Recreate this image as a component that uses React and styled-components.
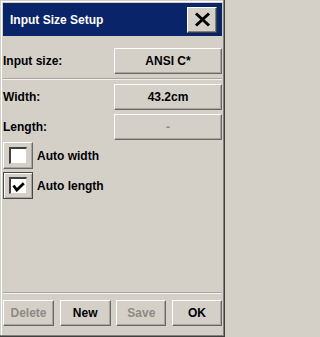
import React from 'react';
import styled, { createGlobalStyle } from 'styled-components';

const GlobalStyle = createGlobalStyle`
  html, body {
    margin: 0;
    padding: 0;
    background: #d4d0c8;
  }
  * { box-sizing: border-box; }
`;

const Window = styled.div`
  width: 225px;
  height: 337px;
  padding: 3px;
  display: flex;
  flex-direction: column;
  background: #d4d0c8;
  font-family: "Liberation Sans", Arial, sans-serif;
  font-weight: bold;
  font-size: 12px;
  color: #000;
  box-shadow: inset -1px -1px #404040, inset -2px -2px #808080,
    inset 1px 1px #d4d0c8, inset 2px 2px #ffffff;
`;

const TitleBar = styled.div`
  height: 33px;
  background: #0a246a;
  display: flex;
  align-items: center;
  justify-content: space-between;
  padding: 0 5px 0 7px;
  color: #fff;
`;

const CloseButton = styled.button`
  width: 30px;
  height: 26px;
  padding: 0;
  display: flex;
  align-items: center;
  justify-content: center;
  background: #d4d0c8;
  border: 1px solid;
  border-color: #ffffff #404040 #404040 #ffffff;
  box-shadow: inset -1px -1px #808080;
`;

const Body = styled.div`
  flex: 1;
  display: flex;
  flex-direction: column;
  padding-top: 12px;
`;

const Row = styled.div`
  display: flex;
  align-items: center;
  justify-content: space-between;
  margin-top: ${(p) => p.$gap || 0}px;
`;

const Label = styled.span`
  padding-left: 0;
`;

const Button = styled.button`
  width: ${(p) => p.$w || 108}px;
  height: 26px;
  padding: 0;
  background: #d4d0c8;
  font: inherit;
  color: ${(p) => (p.disabled ? '#8d8a84' : '#000')};
  border: 1px solid;
  border-color: #ffffff #6b6964 #6b6964 #ffffff;
  box-shadow: inset -1px -1px #a9a59e;
`;

const Separator = styled.div`
  height: 2px;
  border-top: 1px solid #a9a59e;
  border-bottom: 1px solid #f4f2ee;
  margin: ${(p) => p.$m || '0'};
`;

const CheckRow = styled.label`
  display: flex;
  align-items: center;
  gap: 4px;
  margin-top: ${(p) => p.$gap || 0}px;
`;

const CheckFrame = styled.span`
  width: 30px;
  height: 27px;
  display: flex;
  align-items: center;
  justify-content: center;
  background: #d4d0c8;
  border: 1px solid;
  border-color: ${(p) =>
    p.$on ? '#4a4845' : '#ffffff #6b6964 #6b6964 #ffffff'};
  box-shadow: ${(p) =>
    p.$on
      ? 'inset 1px 1px #ffffff, inset -1px -1px #a9a59e'
      : 'inset -1px -1px #a9a59e'};
`;

const CheckBox = styled.span`
  width: 18px;
  height: 17px;
  background: #fff;
  border-top: 2px solid #404040;
  border-left: 2px solid #404040;
  border-right: 1px solid #d4d0c8;
  border-bottom: 1px solid #d4d0c8;
  display: flex;
  align-items: flex-end;
  justify-content: center;
  padding-bottom: 1px;
`;

const Spacer = styled.div`
  flex: 1;
`;

const Footer = styled.div`
  display: flex;
  justify-content: space-between;
  margin: 6px 0 8px;
`;

const CloseIcon = () => (
  <svg width="17" height="15" viewBox="0 0 17 15">
    <path d="M2 1.5 L15 13.5 M15 1.5 L2 13.5" stroke="#000" strokeWidth="3" fill="none" />
  </svg>
);

const CheckIcon = () => (
  <svg width="13" height="10" viewBox="0 0 13 10">
    <path d="M1.5 3.5 L4.8 8 L11.8 1.2" stroke="#000" strokeWidth="2.8" fill="none" />
  </svg>
);

const Check = ({ on, children }) => (
  <CheckRow $gap={on ? 3 : 2}>
    <CheckFrame $on={on}>
      <CheckBox>{on && <CheckIcon />}</CheckBox>
    </CheckFrame>
    {children}
  </CheckRow>
);

export default function App() {
  return (
    <>
      <GlobalStyle />
      <Window>
        <TitleBar>
          <span>Input Size Setup</span>
          <CloseButton aria-label="Close">
            <CloseIcon />
          </CloseButton>
        </TitleBar>
        <Body>
          <Row>
            <Label>Input size:</Label>
            <Button>ANSI C*</Button>
          </Row>
          <Separator $m="4px 0 4px" />
          <Row>
            <Label>Width:</Label>
            <Button>43.2cm</Button>
          </Row>
          <Row $gap={4}>
            <Label>Length:</Label>
            <Button disabled>-</Button>
          </Row>
          <Check>Auto width</Check>
          <Check on>Auto length</Check>
          <Spacer />
          <Separator />
          <Footer>
            <Button $w={51} disabled>Delete</Button>
            <Button $w={51}>New</Button>
            <Button $w={50} disabled>Save</Button>
            <Button $w={50}>OK</Button>
          </Footer>
        </Body>
      </Window>
    </>
  );
}
